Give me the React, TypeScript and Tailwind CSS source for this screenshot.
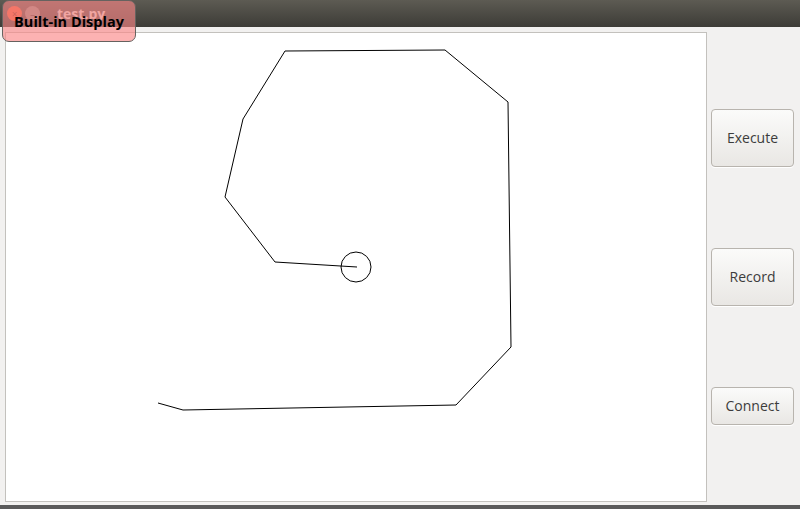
const points = [
    [158, 403],
    [183, 410],
    [456, 405],
    [511, 347],
    [508, 102],
    [445, 50],
    [285, 51],
    [243, 119],
    [225, 197],
    [275, 262],
    [357, 267],
];

const Button = ({ label, tall }: { label: string; tall?: boolean }) => (
    <button
        className={`${tall ? "h-[58px]" : "h-[38px]"} w-[83px] rounded-[4px] border border-[#b8b4ae] bg-gradient-to-b from-[#fbfbfa] to-[#e9e7e4] pb-[2px] text-[14px] text-[#3c3c3c] shadow-[0_1px_0_#ffffff]`}
    >
        {label}
    </button>
);

export default function App() {
    return (
        <div
            className="relative flex h-[509px] w-[800px] flex-col overflow-hidden bg-[#f2f1f0]"
            style={{ fontFamily: '"Open Sans", "DejaVu Sans", sans-serif' }}
        >
            <div className="flex h-[27px] items-center gap-[3px] bg-gradient-to-b from-[#5d5b53] to-[#3d3c37] pl-[7px]">
                <span className="flex h-[15px] w-[15px] items-center justify-center rounded-full bg-[#e95a34] text-[10px] leading-none text-[#7a2a10]">
                    ×
                </span>
                <span className="flex h-[15px] w-[15px] items-center justify-center rounded-full bg-[#8b8a84] text-[10px] leading-none text-[#3c3b37]">
                    –
                </span>
                <span className="ml-[14px] text-[14px] font-bold text-[#dfdbd2]">
                    test.py
                </span>
            </div>

            <div className="flex flex-1">
                <div className="ml-[5px] mt-[5px] h-[470px] w-[702px] border border-[#c3c1bd] bg-white">
                    <svg
                        width="700"
                        height="468"
                        viewBox="6 33 700 468"
                        className="block"
                    >
                        <polyline
                            points={points.map((p) => p.join(",")).join(" ")}
                            fill="none"
                            stroke="black"
                            strokeWidth="1"
                        />
                        <circle
                            cx="356"
                            cy="267"
                            r="15"
                            fill="none"
                            stroke="black"
                            strokeWidth="1"
                        />
                    </svg>
                </div>
                <div className="ml-[4px] flex flex-col gap-[81px] pt-[82px]">
                    <Button label="Execute" tall />
                    <Button label="Record" tall />
                    <Button label="Connect" />
                </div>
            </div>

            <div className="h-[4px] bg-[#5a5a5a]" />

            <div className="absolute left-[2px] top-0 flex h-[42px] w-[134px] items-center justify-center rounded-[7px] border-[1.5px] border-[#66625f] bg-[rgba(250,135,135,0.64)]">
                <span className="mt-[1px] text-[14.5px] font-bold text-black">
                    Built-in Display
                </span>
            </div>
        </div>
    );
}
